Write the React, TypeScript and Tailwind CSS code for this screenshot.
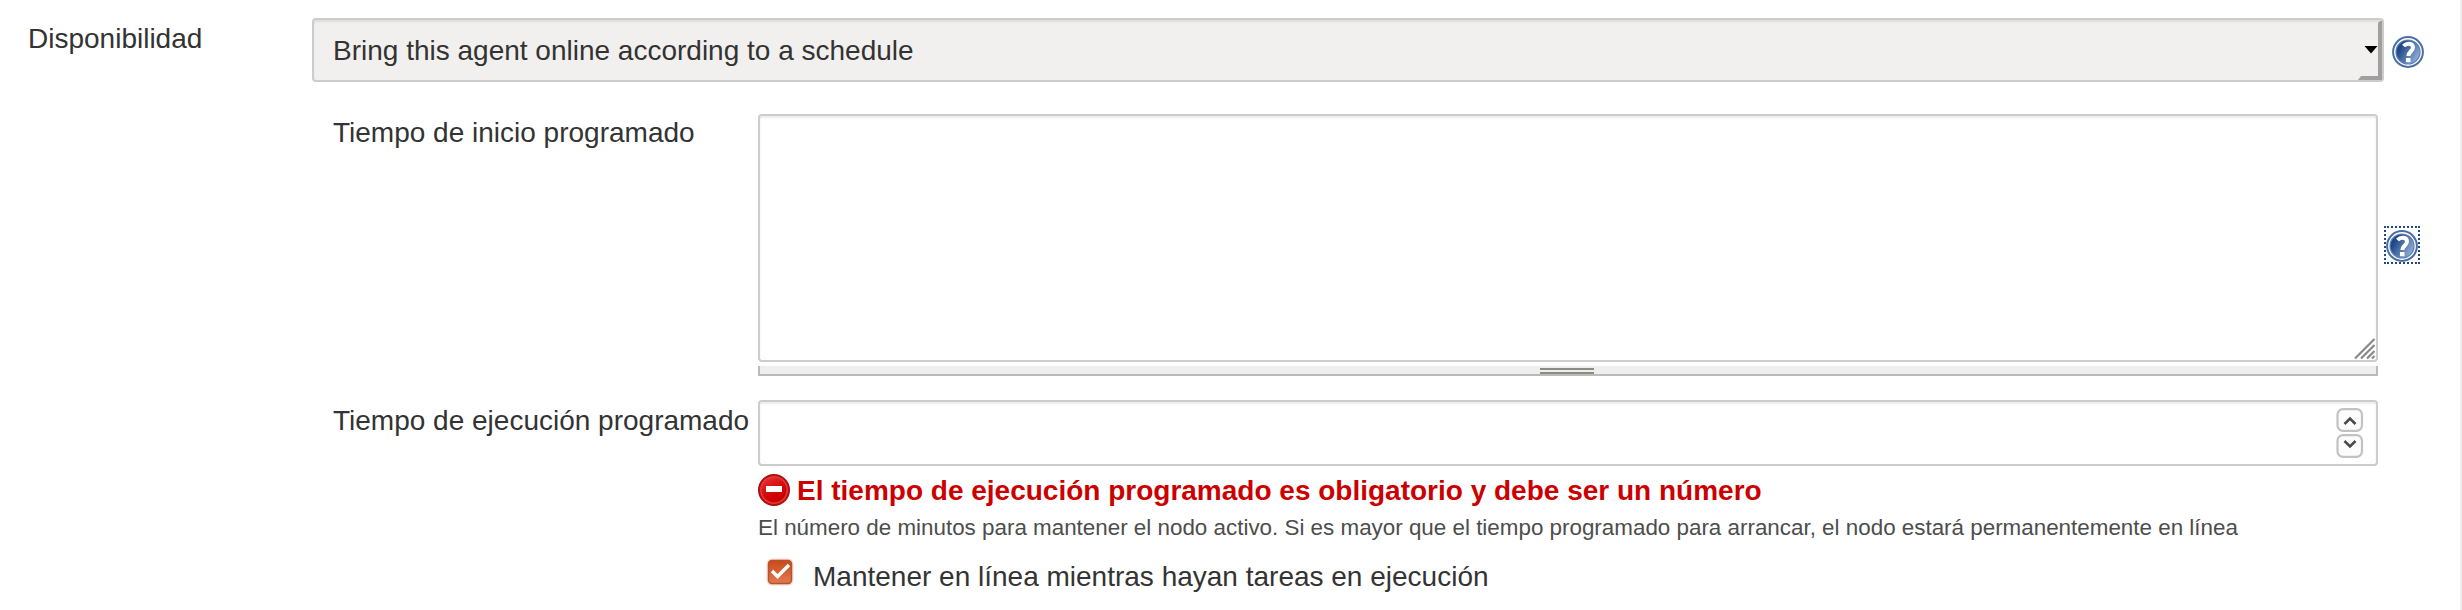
import type { ReactNode } from "react";

function HelpIcon() {
  return (
    <svg viewBox="0 0 32 32" className="block size-8 shrink-0">
      <defs>
        <linearGradient id="help" x1="0" y1="0.2" x2="1" y2="0.8">
          <stop offset="0.2" stopColor="#204a87" />
          <stop offset="1" stopColor="#9db8da" />
        </linearGradient>
      </defs>
      <circle cx="16" cy="16" r="14.9" fill="#fff" stroke="#4a6fa6" strokeWidth="2" />
      <circle cx="16" cy="16" r="12" fill="url(#help)" stroke="#5f80b2" strokeWidth="1.2" />
      <path
        d="M11.5 10C13 8.4 14.8 7.8 16.6 7.8c2.8 0 4.4 1.5 4.4 3.8 0 3.4-4.6 4-4.6 8.4"
        fill="none"
        stroke="#fff"
        strokeWidth="4"
      />
      <rect x="14" y="22" width="4.5" height="4.2" fill="#fff" />
    </svg>
  );
}

function ErrorIcon() {
  return (
    <svg viewBox="0 0 32 32" className="block size-8 shrink-0">
      <defs>
        <linearGradient id="err" x1="0" y1="0" x2="0.6" y2="1">
          <stop offset="0" stopColor="#ea3838" />
          <stop offset="0.6" stopColor="#d40808" />
          <stop offset="1" stopColor="#cc0000" />
        </linearGradient>
      </defs>
      <circle cx="16" cy="16" r="15" fill="#e03a3a" stroke="#b00d0d" strokeWidth="2" />
      <circle cx="16" cy="16" r="12.5" fill="url(#err)" />
      <rect x="8" y="12" width="16" height="6" fill="#fff" />
    </svg>
  );
}

function CheckBox() {
  return (
    <svg viewBox="0 0 28 28" className="mt-px block size-7 shrink-0">
      <defs>
        <linearGradient id="chk" x1="0" y1="0" x2="0" y2="1">
          <stop offset="0" stopColor="#c94a17" />
          <stop offset="1" stopColor="#e07b54" />
        </linearGradient>
      </defs>
      <rect x="0.5" y="0.5" width="27" height="27" rx="5.5" fill="#f3d9cf" />
      <rect x="2.5" y="2.5" width="23" height="23" rx="3.5" fill="url(#chk)" stroke="#b5532c" strokeWidth="1.4" />
      <path d="M6 13 11.5 18.5 23 7" fill="none" stroke="#fff" strokeWidth="3.4" />
    </svg>
  );
}

function SpinButton({ d }: { d: string }) {
  return (
    <svg viewBox="0 0 28 24" className="block h-6 w-7">
      <rect x="1.5" y="1.2" width="24.5" height="21.6" rx="5.5" fill="#fcfcfc" stroke="#c2c2c2" strokeWidth="2.2" />
      <path d={d} fill="none" stroke="#4a4a4a" strokeWidth="2.6" />
    </svg>
  );
}

function Label({ children }: { children: ReactNode }) {
  return <div className="w-[425px] shrink-0 whitespace-nowrap leading-10">{children}</div>;
}

export default function App() {
  return (
    <div className="flex h-[610px] w-[2462px] overflow-hidden border-r-2 border-[#efefef] bg-white font-['Liberation_Sans',Arial,sans-serif] text-[28px] text-[#333]">
      <div className="w-[312px] shrink-0 pt-[19px] pl-[28px] leading-10">Disponibilidad</div>
      <div className="flex flex-col pt-[18px]">
        <div className="flex items-start">
          <div className="relative flex h-16 w-[2072px] items-start rounded-[4px] border-2 border-[#ccc] bg-[#f1f0ee] pl-[19px] shadow-[inset_0_2px_2px_rgba(0,0,0,0.075)]">
            <span className="pt-px leading-[60px]">Bring this agent online according to a schedule</span>
            <svg viewBox="0 0 24 60" className="absolute top-0 right-0 h-[60px] w-6">
              <path d="M6.5 26h13l-6.5 7.5z" fill="#000" />
              <path d="M0 60 3 56H20V3L22 1H24V60z" fill="#9f9f9f" />
            </svg>
          </div>
          <div className="mt-[18px] ml-2">
            <HelpIcon />
          </div>
        </div>

        <div className="mt-8 flex pl-[21px]">
          <div className="-mt-px">
            <Label>Tiempo de inicio programado</Label>
          </div>
          <div className="flex w-[1620px] flex-col">
            <div className="flex h-[248px] items-end justify-end rounded-[4px] border-2 border-[#ccc] bg-white shadow-[inset_0_2px_2px_rgba(0,0,0,0.075)]">
              <svg viewBox="0 0 22 22" className="block size-[22px]">
                <path
                  d="M1 20.5 20.5 1M7 20.5 20.5 7M13 20.5 20.5 13M18 20.5 20.5 18"
                  stroke="#888"
                  strokeWidth="2.2"
                />
              </svg>
            </div>
            <div className="mt-1 flex h-[10px] justify-center border-x-2 border-b-2 border-[#bbbbb3] bg-[#eee] pt-0.5 pr-[2px]">
              <div className="h-[6px] w-[54px] border-y-2 border-[#8b8b85]" />
            </div>
          </div>
          <div className="mt-[112px] ml-[6px] h-[38px] w-9 border-2 border-dotted border-[#204a87] pt-[2px]">
            <HelpIcon />
          </div>
        </div>

        <div className="mt-6 flex pl-[21px]">
          <div className="pt-px">
            <Label>Tiempo de ejecución programado</Label>
          </div>
          <div className="flex w-[1620px] flex-col">
            <div className="flex h-[66px] flex-col items-end gap-0.5 rounded-[4px] border-2 border-[#ccc] bg-white pt-[6px] pr-3 shadow-[inset_0_2px_2px_rgba(0,0,0,0.075)]">
              <SpinButton d="M8.5 16 14 10.5 19.5 16" />
              <SpinButton d="M8.5 7 14 12.5 19.5 7" />
            </div>
            <div className="mt-2 flex items-start gap-[7px] font-bold whitespace-nowrap text-[#c00]">
              <ErrorIcon />
              <span className="pt-px leading-[31px]">
                El tiempo de ejecución programado es obligatorio y debe ser un número
              </span>
            </div>
            <div className="mt-[6px] text-[22.4px] leading-8 whitespace-nowrap text-[#4d4d4d]">
              El número de minutos para mantener el nodo activo. Si es mayor que el tiempo programado para arrancar, el nodo
              estará permanentemente en línea
            </div>
            <div className="mt-[13px] flex gap-[19px] pl-2">
              <CheckBox />
              <span className="leading-10">Mantener en línea mientras hayan tareas en ejecución</span>
            </div>
          </div>
        </div>
      </div>
    </div>
  );
}
